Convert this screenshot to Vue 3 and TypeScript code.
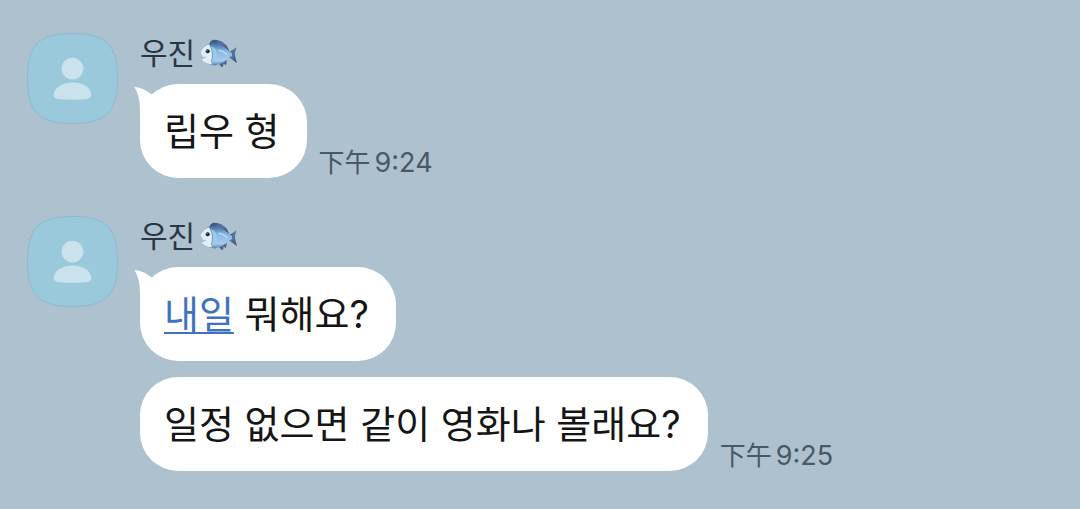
<script setup lang="ts">
interface Part {
  text: string
  link?: boolean
}

interface Message {
  parts: Part[]
  time?: string
}

interface Group {
  sender: string
  messages: Message[]
}

const groups: Group[] = [
  {
    sender: '우진',
    messages: [{ parts: [{ text: '립우 형' }], time: '9:24' }],
  },
  {
    sender: '우진',
    messages: [
      { parts: [{ text: '내일', link: true }, { text: ' 뭐해요?' }] },
      { parts: [{ text: '일정 없으면 같이 영화나 볼래요?' }], time: '9:25' },
    ],
  },
]
</script>

<template>
  <main class="chat" lang="ko">
    <svg class="defs" width="0" height="0" aria-hidden="true">
      <defs>
        <linearGradient id="fish-body" x1="0" y1="0" x2="0" y2="1">
          <stop offset="0" stop-color="#426c9e" />
          <stop offset="0.35" stop-color="#86b7e2" />
          <stop offset="0.8" stop-color="#a5cdec" />
          <stop offset="1" stop-color="#5f8ab8" />
        </linearGradient>
        <linearGradient id="fish-fin" x1="0" y1="0" x2="1" y2="1">
          <stop offset="0" stop-color="#2e4c78" />
          <stop offset="0.5" stop-color="#57799f" />
          <stop offset="1" stop-color="#2d4770" />
        </linearGradient>
      </defs>
    </svg>

    <section v-for="(group, g) in groups" :key="g" class="group">
      <svg class="avatar" viewBox="0 0 92 92" aria-hidden="true">
        <path
          class="avatar-shape"
          d="M46 .5C80 .5 91.5 12 91.5 46S80 91.5 46 91.5 .5 80 .5 46 12 .5 46 .5Z"
        />
        <circle class="avatar-person" cx="46" cy="36" r="11" />
        <path
          class="avatar-person"
          d="M46 50C57 50 65 56 65 62.500C65 65 63 66.500 60 67Q46 68 32 67C29 66.500 27 65 27 62.500C27 56 35 50 46 50Z"
        />
      </svg>

      <div class="body">
        <h2 class="sender">
          <span>{{ group.sender }}</span>
          <svg class="fish" viewBox="0 0 114 90" role="img" aria-label="🐟">
            <path fill="url(#fish-fin)" d="M27 19Q31 8 39 5Q66 5 79 22Q84 29 87 39L60 32Z" />
            <path fill="url(#fish-fin)" d="M54 76L66 88Q71 84 71 76L77 82Q81 75 80 65ZM32 77L45 83L52 77Z" />
            <path fill="url(#fish-fin)" d="M85 43Q96 39 110 28Q104 44 105 50Q106 60 111 75Q99 67 85 56Z" />
            <path
              fill="url(#fish-body)"
              d="M2 43Q13 18 36 16Q66 16 86 39L96 45L96 54L84 60Q66 81 42 81Q16 80 4 62L10 55Q1 49 2 43Z"
            />
            <path fill="#e2eef6" d="M2 43Q12 22 27 19Q43 38 34 79Q12 76 4 62L10 55Q1 49 2 43Z" />
            <path fill="#9acbed" d="M31 24Q54 32 50 53Q46 68 34 72Q42 45 31 24Z" />
            <path fill="none" stroke="#567da5" stroke-width="2" d="M4 61Q12 61 17 57M31 24Q42 45 34 72" />
            <path fill="none" stroke="#b8daf2" stroke-width="4" d="M56 36Q72 40 82 50" />
            <circle cx="23" cy="40" r="6" fill="#161d26" />
            <circle cx="21" cy="38" r="1.500" fill="#fff" />
          </svg>
        </h2>

        <div v-for="(message, m) in group.messages" :key="m" class="row">
          <p class="bubble">
            <svg v-if="m === 0" class="tail" viewBox="0 0 24 40" aria-hidden="true">
              <path d="M.5 3Q10 4 17 10L24 12V40H6V26Q6 12 .5 3Z" />
            </svg>
            <template v-for="(part, p) in message.parts" :key="p">
              <a v-if="part.link" class="link" href="#">{{ part.text }}</a>
              <span v-else>{{ part.text }}</span>
            </template>
          </p>
          <time v-if="message.time" class="time" :datetime="message.time" lang="zh-Hant">
            <span>下午</span><span class="clock">{{ message.time }}</span>
          </time>
        </div>
      </div>
    </section>
  </main>
</template>

<style>
body {
  margin: 0;
  background: #aec1cf;
}
</style>

<style scoped>
.chat {
  box-sizing: border-box;
  min-height: 100vh;
  padding: 33px 27px;
  display: flex;
  flex-direction: column;
  gap: 38px;
  background: #aec1cf;
  font-family: Inter, 'Noto Sans CJK KR', sans-serif;
}

.defs {
  position: absolute;
}

.group {
  display: flex;
  align-items: flex-start;
  gap: 22px;
}

.avatar {
  flex: none;
  width: 91px;
  height: 91px;
}

.avatar-shape {
  fill: #9bc9dc;
  stroke: #8fb9cd;
}

.avatar-person {
  fill: #c9e2ec;
}

.body {
  min-width: 0;
}

.sender {
  margin: 0 0 11px;
  display: flex;
  align-items: center;
  gap: 5px;
  color: #2b3642;
  font-size: 30px;
  font-weight: 400;
  line-height: 40px;
}

.fish {
  width: 38px;
  height: 30px;
}

.row {
  display: flex;
  align-items: flex-end;
  gap: 12px;
}

.row + .row {
  margin-top: 16px;
}

.bubble {
  position: relative;
  margin: 0;
  padding: 22px 27px 22px 24px;
  border-radius: 38px;
  background: #fff;
  color: #151515;
  font-size: 38px;
  line-height: 50px;
  white-space: pre-wrap;
}

.tail {
  position: absolute;
  top: 0;
  left: -6px;
  width: 24px;
  height: 40px;
  fill: #fff;
}

.link {
  color: #3f74bd;
  text-decoration: underline;
  text-decoration-thickness: 2px;
  text-underline-offset: 4px;
}

.time {
  display: flex;
  flex: none;
  gap: 4px;
  color: #4a5866;
  font-family: Inter, 'Noto Sans CJK TC', sans-serif;
  font-size: 26px;
  line-height: 30px;
}

.clock {
  font-size: 27px;
}
</style>
